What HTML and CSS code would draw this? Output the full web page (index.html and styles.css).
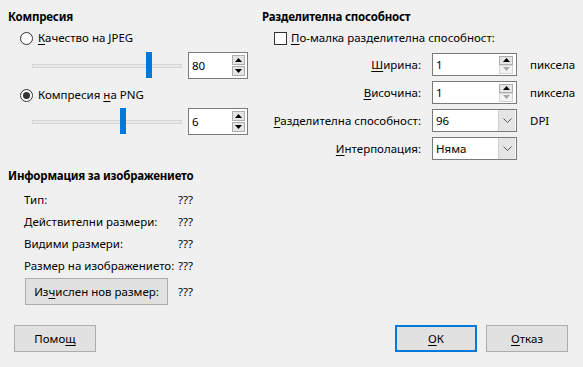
FILE: index.html
```html
<!DOCTYPE html>
<html lang="bg">
<head>
<meta charset="utf-8">
<link rel="stylesheet" href="styles.css">
</head>
<body>
<div class="dialog">
  <div class="main">
    <div class="left">
      <div class="sec-title">Компресия</div>
      <div class="opt-row first">
        <span class="radio"></span>
        <span><u>К</u>ачество на JPEG</span>
      </div>
      <div class="slider-row">
        <div class="slider"><div class="track"></div><div class="thumb" style="left:114px"></div></div>
        <div class="spin">
          <span class="val">80</span>
          <span class="spin-btns">
            <span class="sb"><svg width="7" height="4" viewBox="0 0 7 4"><path d="M0 4 L3.5 0 L7 4 Z" fill="#000"/></svg></span>
            <span class="sb"><svg width="7" height="4" viewBox="0 0 7 4"><path d="M0 0 L3.5 4 L7 0 Z" fill="#000"/></svg></span>
          </span>
        </div>
      </div>
      <div class="opt-row second">
        <span class="radio checked"></span>
        <span>Компресия <u>н</u>а PNG</span>
      </div>
      <div class="slider-row second">
        <div class="slider"><div class="track"></div><div class="thumb" style="left:88px"></div></div>
        <div class="spin">
          <span class="val">6</span>
          <span class="spin-btns">
            <span class="sb"><svg width="7" height="4" viewBox="0 0 7 4"><path d="M0 4 L3.5 0 L7 4 Z" fill="#000"/></svg></span>
            <span class="sb"><svg width="7" height="4" viewBox="0 0 7 4"><path d="M0 0 L3.5 4 L7 0 Z" fill="#000"/></svg></span>
          </span>
        </div>
      </div>

      <div class="sec-title info-title">Информация за изображението</div>
      <div class="info">
        <span>Тип:</span><span>???</span>
        <span>Действителни размери:</span><span>???</span>
        <span>Видими размери:</span><span>???</span>
        <span>Размер на изображението:</span><span>???</span>
      </div>
      <div class="calc-row">
        <button class="btn calc">Из<u>ч</u>ислен нов размер:</button>
        <span>???</span>
      </div>
    </div>

    <div class="right">
      <div class="sec-title">Разделителна способност</div>
      <div class="opt-row first">
        <span class="check"></span>
        <span><u>П</u>о-малка разделителна способност:</span>
      </div>
      <div class="res-grid">
        <span class="lbl"><u>Ш</u>ирина:</span>
        <div class="field">
          <span class="val">1</span>
          <span class="spin-btns small">
            <span class="sb"><svg width="7" height="4" viewBox="0 0 7 4"><path d="M0 4 L3.5 0 L7 4 Z" fill="#000"/></svg></span>
            <span class="sb off"><svg width="7" height="4" viewBox="0 0 7 4"><path d="M0 0 L3.5 4 L7 0 Z" fill="#a6a6a6"/></svg></span>
          </span>
        </div>
        <span class="unit">пиксела</span>

        <span class="lbl"><u>В</u>исочина:</span>
        <div class="field">
          <span class="val">1</span>
          <span class="spin-btns small">
            <span class="sb"><svg width="7" height="4" viewBox="0 0 7 4"><path d="M0 4 L3.5 0 L7 4 Z" fill="#000"/></svg></span>
            <span class="sb off"><svg width="7" height="4" viewBox="0 0 7 4"><path d="M0 0 L3.5 4 L7 0 Z" fill="#a6a6a6"/></svg></span>
          </span>
        </div>
        <span class="unit">пиксела</span>

        <span class="lbl"><u>Р</u>азделителна способност:</span>
        <div class="field">
          <span class="val">96</span>
          <span class="drop"><svg width="9" height="5" viewBox="0 0 9 5"><polyline points="0.5,0.5 4.5,4.5 8.5,0.5" fill="none" stroke="#555" stroke-width="1"/></svg></span>
        </div>
        <span class="unit">DPI</span>

        <span class="lbl"><u>И</u>нтерполация:</span>
        <div class="field">
          <span class="val">Няма</span>
          <span class="drop"><svg width="9" height="5" viewBox="0 0 9 5"><polyline points="0.5,0.5 4.5,4.5 8.5,0.5" fill="none" stroke="#555" stroke-width="1"/></svg></span>
        </div>
        <span class="unit"></span>
      </div>
    </div>
  </div>

  <div class="footer">
    <button class="btn foot">Помо<u>щ</u></button>
    <span class="spacer"></span>
    <button class="btn foot ok"><u>О</u>К</button>
    <button class="btn foot"><u>О</u>тказ</button>
  </div>
</div>
</body>
</html>
```

FILE: styles.css
```css
* { box-sizing: border-box; }
html, body {
  margin: 0;
  padding: 0;
}
body {
  width: 583px;
  height: 367px;
  background: #f0f0f0;
  font-family: "Noto Sans", "Open Sans", sans-serif;
  font-size: 11.5px;
  color: #000;
  overflow: hidden;
  white-space: nowrap;
}
u { text-decoration: underline; text-underline-offset: 2px; }

.dialog { display: flex; flex-direction: column; }

.main {
  display: flex;
  padding: 8px 0 0 8px;
}
.left { width: 254px; display: flex; flex-direction: column; }
.right { flex: 1; display: flex; flex-direction: column; }

.sec-title {
  font-weight: bold;
  height: 18px;
  line-height: 18px;
  letter-spacing: -0.2px;
}

.opt-row {
  display: flex;
  align-items: center;
  gap: 5px;
  height: 18px;
  line-height: 18px;
  padding-left: 12px;
}
.opt-row.first { margin-top: 3px; }
.opt-row.second { margin-top: 7px; }

.radio {
  width: 13px;
  height: 13px;
  border: 1px solid #333;
  border-radius: 50%;
  background: #fff;
  display: flex;
  align-items: center;
  justify-content: center;
  flex: none;
}
.radio.checked::after {
  content: "";
  width: 7px;
  height: 7px;
  border-radius: 50%;
  background: #333;
}
.check {
  width: 13px;
  height: 13px;
  border: 1px solid #333;
  background: #fff;
  flex: none;
}
.right .opt-row { gap: 4px; }

.slider-row {
  display: flex;
  align-items: center;
  margin-top: 5px;
  height: 27px;
  padding-left: 24px;
  gap: 6px;
}
.slider-row.second { margin-top: 4px; }
.slider {
  position: relative;
  width: 150px;
  height: 27px;
  display: flex;
  align-items: center;
}
.track {
  width: 100%;
  height: 4px;
  background: #e7eaea;
  border: 1px solid #d6d6d6;
}
.thumb {
  position: absolute;
  top: 0;
  width: 6px;
  height: 26px;
  background: #0078d7;
}

.spin, .field {
  display: flex;
  align-items: center;
  background: #fff;
  border: 1px solid #7a7a7a;
}
.spin {
  width: 60px;
  height: 27px;
}
.val {
  flex: 1;
  padding-left: 3px;
  line-height: 16px;
}
.spin-btns {
  display: flex;
  flex-direction: column;
  gap: 1px;
  margin-right: 2px;
}
.sb {
  width: 13px;
  height: 10px;
  background: #e5e5e5;
  border: 1px solid #adadad;
  display: flex;
  align-items: center;
  justify-content: center;
}
.sb.off {
  background: #f3f3f3;
  border-color: #d4d4d4;
}
.spin-btns.small { gap: 0; }
.spin-btns.small .sb { width: 14px; height: 9px; }

.info-title { margin-top: 32px; }
.info {
  display: grid;
  grid-template-columns: 154px auto;
  grid-auto-rows: 22px;
  align-items: center;
  margin-top: 3px;
  padding-left: 16px;
}
.calc-row {
  display: flex;
  align-items: center;
  gap: 10px;
  margin-top: 2px;
  padding-left: 17px;
}

.btn {
  font: inherit;
  color: #000;
  background: #e1e1e1;
  border: 1px solid #adadad;
  padding: 0;
  height: 27px;
  display: flex;
  align-items: center;
  justify-content: center;
}
.calc { width: 143px; }

.res-grid {
  display: grid;
  grid-template-columns: 170px 85px auto;
  grid-auto-rows: 23px;
  row-gap: 5px;
  column-gap: 0;
  align-items: center;
  margin-top: 6px;
}
.lbl { padding-right: 11px; text-align: right; }
.field { height: 23px; width: 85px; padding-right: 1px; }
.unit { padding-left: 13px; }
.drop {
  width: 17px;
  height: 21px;
  background: #e5e5e5;
  border-left: 1px solid #cfcfcf;
  display: flex;
  align-items: center;
  justify-content: center;
}

.footer {
  display: flex;
  margin-top: 20px;
  padding: 0 15px 0 14px;
  gap: 9px;
}
.spacer { flex: 1; }
.foot { width: 82px; }
.ok { border: 2px solid #0078d7; }
```
